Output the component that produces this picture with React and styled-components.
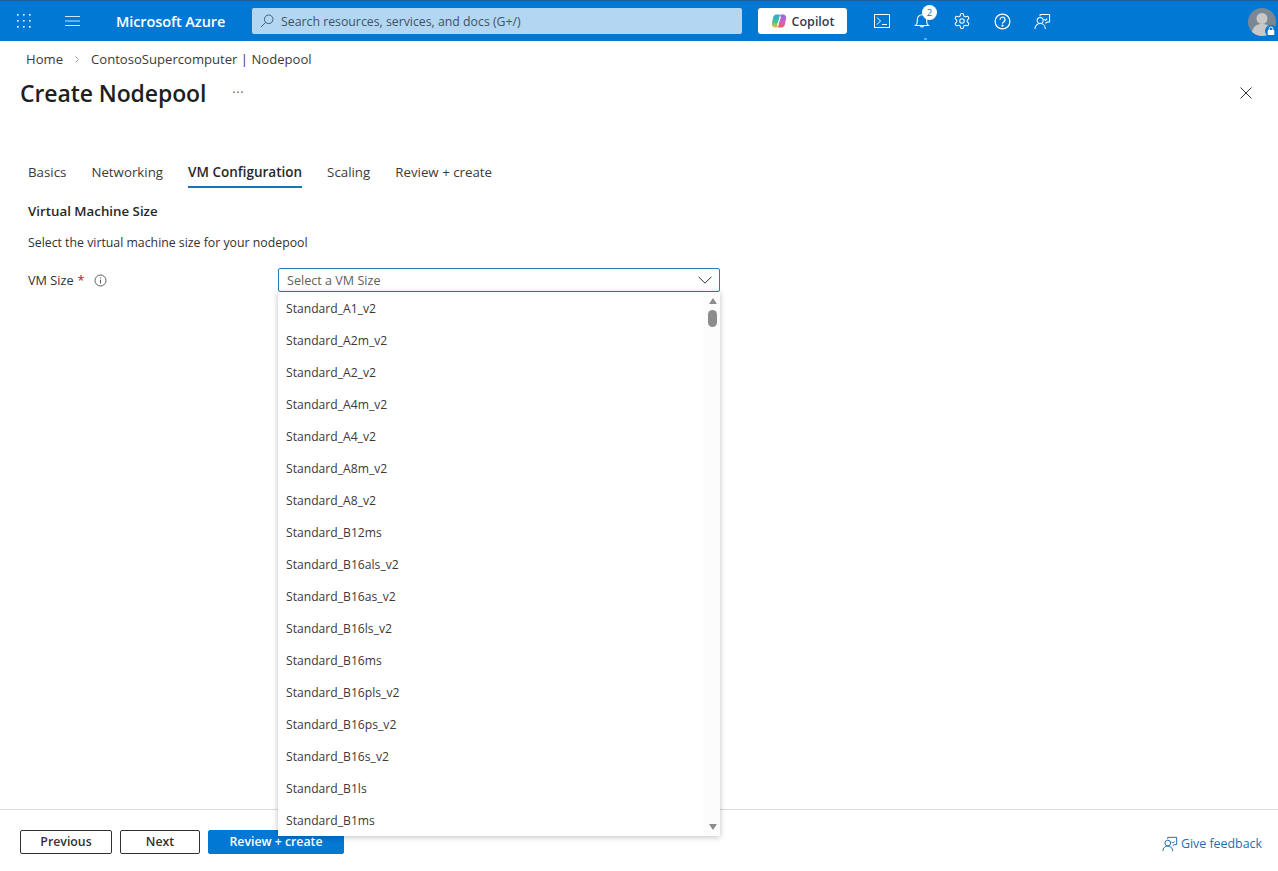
import React from "react";
import styled, { createGlobalStyle } from "styled-components";

const Global = createGlobalStyle`
  html, body { margin: 0; padding: 0; background: #fff; }
  body { font-family: "Open Sans", "Noto Sans", "Liberation Sans", sans-serif; color: #292827; }
  * { box-sizing: border-box; }
`;

const Page = styled.div`
  width: 1278px; height: 871px; display: flex; flex-direction: column; overflow: hidden; position: relative; background: #fff;
`;
const TopBar = styled.header`
  height: 41px; flex: none; background: #0078d4; border-top: 1px solid #1d5f96; display: flex; align-items: center; position: relative;
`;
const BarIcon = styled.div`
  width: 40px; height: 40px; flex: none; display: flex; align-items: center; justify-content: center; color: #fff; position: relative;
`;
const Waffle = styled(BarIcon)`margin-left: 4px;`;
const Burger = styled(BarIcon)`margin-left: 8px;`;
const Brand = styled.div`
  font-size: 14.5px; font-weight: 600; color: #fff; margin-left: 24px; width: 136px; white-space: nowrap; letter-spacing: -0.1px;
`;
const Search = styled.div`
  width: 490px; height: 26px; border-radius: 2px; background: #b3d7f2; display: flex; align-items: center; padding-left: 8px; gap: 7px; color: #323130; font-size: 12.3px; flex: none;
`;
const SearchText = styled.span`color: #3d5266;`;
const CopilotBtn = styled.div`
  width: 89px; height: 26px; margin-left: 16px; background: #fff; border-radius: 3px; display: flex; align-items: center; justify-content: center; gap: 5px; font-size: 12.5px; font-weight: 600; color: #2f3a52; flex: none;
`;
const Icons = styled.div`display: flex; margin-left: 15px;`;
const Badge = styled.span`
  position: absolute; top: 4px; left: 20px; width: 15px; height: 15px; border-radius: 50%; background: #fff; color: #0078d4; font-size: 9.5px; display: flex; align-items: center; justify-content: center;
`;
const Tick = styled.span`
  position: absolute; left: 22px; bottom: 1px; width: 3px; height: 2px; background: #50b0f0;
`;
const Avatar = styled.div`position: absolute; right: 0; top: 6px; width: 30px; height: 30px;`;

const Breadcrumb = styled.nav`
  height: 36px; flex: none; padding-left: 26px; display: flex; align-items: center; font-size: 13.1px; color: #3b3a39;
`;
const Crumb = styled.span`white-space: nowrap;`;
const CrumbSep = styled.span`margin: 0 12px; display: flex; color: #a19f9d;`;
const TitleRow = styled.div`
  height: 32px; flex: none; padding: 0 26px 0 20px; display: flex; align-items: center;
`;
const Title = styled.h1`
  margin: 0; font-size: 23px; font-weight: 600; color: #201f1e; white-space: nowrap; letter-spacing: -0.1px;
`;
const More = styled.span`margin-left: 26px; font-size: 13px; color: #605e5c; letter-spacing: 0.5px; position: relative; top: -1px;`;
const Close = styled.div`margin-left: auto; display: flex; color: #323130;`;

const Tabs = styled.div`
  margin-top: 45px; flex: none; padding-left: 28px; display: flex; height: 43px; gap: 25px;
`;
const Tab = styled.div`
  font-size: ${p => (p.$active ? 13.5 : 13.3)}px; color: #3b3a39; padding-top: 9px; height: 34px; white-space: nowrap;
  font-weight: ${p => (p.$active ? 600 : 400)};
  ${p => (p.$active ? "color:#292827; border-bottom: 2px solid #1b73b4;" : "")}
`;
const Content = styled.main`flex: 1; padding-left: 28px; min-height: 0;`;
const SectionTitle = styled.h2`
  margin: 0; font-size: 13.3px; font-weight: 600; color: #292827; line-height: 18px; padding-top: 5px; height: 24px;
`;
const Description = styled.p`margin: 13px 0 0; font-size: 12.3px; line-height: 18px; color: #323130;`;
const FieldRow = styled.div`display: flex; align-items: center; margin-top: 16px; height: 24px;`;
const FieldLabel = styled.label`
  width: 250px; flex: none; display: flex; align-items: center; font-size: 12.7px; color: #323130;
`;
const Required = styled.span`color: #a4262c; margin-left: 4px;`;
const InfoIcon = styled.span`display: flex; margin-left: 9px; color: #605e5c;`;
const SelectBox = styled.div`
  width: 442px; height: 24px; border: 1px solid #1f7fbd; border-radius: 2px; display: flex; align-items: center; justify-content: space-between; padding: 0 7px 0 8px; font-size: 12.6px; color: #605e5c;
`;
const Dropdown = styled.div`
  position: absolute; left: 278px; top: 292px; width: 442px; height: 544px; background: #fff; box-shadow: 0 1px 6px rgba(0,0,0,.25); display: flex; z-index: 5;
`;
const List = styled.ul`margin: 0; padding: 0; list-style: none; flex: 1;`;
const Option = styled.li`
  height: 32px; display: flex; align-items: center; padding-left: 8px; font-size: 12.15px; color: #3b3a39;
`;
const Scrollbar = styled.div`
  width: 17px; flex: none; background: #fcfcfc; display: flex; flex-direction: column; align-items: center; padding: 6px 0 6px 2px;
`;
const Thumb = styled.div`width: 9px; height: 17px; margin-top: 6px; border-radius: 5px; background: #8c8c8c;`;
const ArrowUp = styled.div`width: 0; height: 0; border-left: 4.5px solid transparent; border-right: 4.5px solid transparent; border-bottom: 6px solid #8c8c8c;`;
const ArrowDown = styled.div`width: 0; height: 0; margin-top: auto; border-left: 4.5px solid transparent; border-right: 4.5px solid transparent; border-top: 6px solid #8c8c8c;`;

const Footer = styled.footer`
  height: 62px; flex: none; border-top: 1px solid #dcdcdc; display: flex; align-items: flex-start; padding: 20px 16px 0 20px;
`;
const Button = styled.button`
  height: 24px; width: ${p => p.$w}px; margin-right: 8px; border-radius: 2px; font-family: inherit; font-size: 12.3px; font-weight: 600; padding: 0 0 2px;
  border: 1px solid ${p => (p.$primary ? "#0078d4" : "#323130")};
  background: ${p => (p.$primary ? "#0078d4" : "#fff")};
  color: ${p => (p.$primary ? "#fff" : "#323130")};
`;
const Feedback = styled.a`
  margin-left: auto; margin-top: 5px; display: flex; align-items: center; gap: 3px; color: #1b6fb0; font-size: 12.4px; white-space: nowrap;
`;

const FeedbackIcon = ({ size = 18 }) => (
  <svg width={size} height={size} viewBox="0 0 18 18" fill="none" stroke="currentColor" strokeWidth="1.1">
    <path d="M6.500 3.500V1.500h10v8H14l-2 1.500" />
    <circle cx="6.500" cy="8" r="3.200" />
    <path d="M1 17c0-3.400 2.300-5.800 5.500-5.800S12 13.600 12 17" />
    <path d="M10.800 6.500l1.400 1.500 1.800-2" />
  </svg>
);

const sizes = ["Standard_A1_v2","Standard_A2m_v2","Standard_A2_v2","Standard_A4m_v2","Standard_A4_v2","Standard_A8m_v2","Standard_A8_v2","Standard_B12ms","Standard_B16als_v2","Standard_B16as_v2","Standard_B16ls_v2","Standard_B16ms","Standard_B16pls_v2","Standard_B16ps_v2","Standard_B16s_v2","Standard_B1ls","Standard_B1ms"];

export default function App() {
  return (
    <Page>
      <Global />
      <TopBar>
        <Waffle>
          <svg width="14" height="14" viewBox="0 0 14 14" fill="currentColor">
            {[1, 7, 13].flatMap(y => [1, 7, 13].map(x => <rect key={`${x}-${y}`} x={x - 1} y={y - 1} width="1.6" height="1.6" />))}
          </svg>
        </Waffle>
        <Burger>
          <svg width="15" height="12" viewBox="0 0 15 12" fill="none" stroke="#cfe6f8" strokeWidth="1.2">
            <path d="M0 1.500h15M0 6h15M0 10.500h15" />
          </svg>
        </Burger>
        <Brand>Microsoft Azure</Brand>
        <Search>
          <svg width="14" height="14" viewBox="0 0 14 14" fill="none" stroke="#3f5f7c" strokeWidth="1">
            <circle cx="8.700" cy="5.300" r="4.300" /><path d="M5.600 8.400L1 13" />
          </svg>
          <SearchText>Search resources, services, and docs (G+/)</SearchText>
        </Search>
        <CopilotBtn>
          <svg width="16" height="16" viewBox="0 0 16 16">
            <defs>
              <linearGradient id="cgA" x1="0" y1="0" x2="0" y2="1"><stop offset="0" stopColor="#2fa8e0" /><stop offset=".55" stopColor="#45c28a" /><stop offset="1" stopColor="#f4c13a" /></linearGradient>
              <linearGradient id="cgB" x1="0" y1="0" x2="0" y2="1"><stop offset="0" stopColor="#8a6be0" /><stop offset=".55" stopColor="#d45fc0" /><stop offset="1" stopColor="#ef5f5f" /></linearGradient>
            </defs>
            <path d="M5.500 1.500H9L6.500 14.500H4C1.800 14.500.5 12.500.9 10.500l1.100-5.500C2.400 2.800 3.600 1.500 5.500 1.500z" fill="url(#cgA)" />
            <path d="M10.500 14.500H7L9.500 1.500H12c2.200 0 3.500 2 3.100 4l-1.100 5.500c-.4 2.200-1.600 3.500-3.500 3.500z" fill="url(#cgB)" />
            <path d="M9.600 3.500L6.400 12.500" stroke="#fff" strokeWidth="1.100" />
          </svg>
          Copilot
        </CopilotBtn>
        <Icons>
          <BarIcon>
            <svg width="16" height="14" viewBox="0 0 16 14" fill="none" stroke="currentColor" strokeWidth="1">
              <rect x=".5" y=".5" width="15" height="13" /><path d="M3 3.500l3.500 3.500L3 10.500M8 10.500h5" />
            </svg>
          </BarIcon>
          <BarIcon>
            <svg width="16" height="16" viewBox="0 0 16 16" fill="none" stroke="currentColor" strokeWidth="1.100">
              <path d="M1.500 12.500h13c-1.300-1-1.800-2-1.800-4V6.500a4.700 4.700 0 0 0-9.400 0v2c0 2-.5 3-1.800 4z" /><path d="M6.300 12.800a1.800 1.800 0 0 0 3.400 0" />
            </svg>
            <Badge>2</Badge>
            <Tick />
          </BarIcon>
          <BarIcon>
            <svg width="18" height="18" viewBox="0 0 24 24" fill="none" stroke="currentColor" strokeWidth="1.400" strokeLinejoin="round">
              <path d="M12.220 2h-.44a2 2 0 0 0-2 2v.18a2 2 0 0 1-1 1.730l-.43.25a2 2 0 0 1-2 0l-.15-.08a2 2 0 0 0-2.730.73l-.22.380a2 2 0 0 0 .73 2.730l.15.1a2 2 0 0 1 1 1.720v.510a2 2 0 0 1-1 1.740l-.15.090a2 2 0 0 0-.73 2.730l.22.380a2 2 0 0 0 2.730.730l.15-.080a2 2 0 0 1 2 0l.43.250a2 2 0 0 1 1 1.730V20a2 2 0 0 0 2 2h.44a2 2 0 0 0 2-2v-.180a2 2 0 0 1 1-1.730l.43-.250a2 2 0 0 1 2 0l.15.080a2 2 0 0 0 2.730-.730l.22-.390a2 2 0 0 0-.73-2.730l-.15-.080a2 2 0 0 1-1-1.740v-.500a2 2 0 0 1 1-1.740l.15-.090a2 2 0 0 0 .73-2.730l-.22-.380a2 2 0 0 0-2.730-.730l-.15.080a2 2 0 0 1-2 0l-.43-.250a2 2 0 0 1-1-1.730V4a2 2 0 0 0-2-2z" />
              <circle cx="12" cy="12" r="3" />
            </svg>
          </BarIcon>
          <BarIcon>
            <svg width="17" height="17" viewBox="0 0 17 17" fill="none" stroke="currentColor" strokeWidth="1.200">
              <circle cx="8.500" cy="8.500" r="7.400" />
              <path d="M6 6.700a2.500 2.500 0 1 1 3.700 2.200c-.8.500-1.200.9-1.200 1.800" />
              <circle cx="8.500" cy="12.700" r=".5" fill="currentColor" />
            </svg>
          </BarIcon>
          <BarIcon><FeedbackIcon size={17} /></BarIcon>
        </Icons>
        <Avatar>
          <svg width="30" height="30" viewBox="0 0 30 30">
            <circle cx="14" cy="15" r="14" fill="#7a8794" />
            <circle cx="14" cy="11.500" r="5.500" fill="#c8c8c8" />
            <path d="M4 25c1-5.500 4.500-8 10-8s9 2.500 10 8c-3 2.500-6.500 4-10 4s-7-1.500-10-4z" fill="#c8c8c8" />
            <circle cx="23" cy="24" r="6" fill="#0078d4" />
            <rect x="19.700" y="23" width="6.600" height="5" rx=".8" fill="#fff" />
            <path d="M21.200 23v-1.300a1.800 1.800 0 0 1 3.600 0V23" fill="none" stroke="#fff" strokeWidth="1" />
          </svg>
        </Avatar>
      </TopBar>

      <Breadcrumb>
        <Crumb>Home</Crumb>
        <CrumbSep>
          <svg width="4" height="7" viewBox="0 0 4 7" fill="none" stroke="currentColor" strokeWidth="1"><path d="M.5.500l3 3-3 3" /></svg>
        </CrumbSep>
        <Crumb>ContosoSupercomputer | Nodepool</Crumb>
      </Breadcrumb>

      <TitleRow>
        <Title>Create Nodepool</Title>
        <More>···</More>
        <Close>
          <svg width="12" height="12" viewBox="0 0 12 12" fill="none" stroke="currentColor" strokeWidth="1"><path d="M.5.500l11 11M11.500.500l-11 11" /></svg>
        </Close>
      </TitleRow>

      <Tabs>
        <Tab>Basics</Tab>
        <Tab>Networking</Tab>
        <Tab $active>VM Configuration</Tab>
        <Tab>Scaling</Tab>
        <Tab>Review + create</Tab>
      </Tabs>

      <Content>
        <SectionTitle>Virtual Machine Size</SectionTitle>
        <Description>Select the virtual machine size for your nodepool</Description>
        <FieldRow>
          <FieldLabel>
            VM Size<Required>*</Required>
            <InfoIcon>
              <svg width="13" height="13" viewBox="0 0 13 13" fill="none" stroke="currentColor" strokeWidth="1">
                <circle cx="6.500" cy="6.500" r="5.500" /><path d="M6.500 5.700v3.800M6.500 3.500v1" />
              </svg>
            </InfoIcon>
          </FieldLabel>
          <SelectBox>
            Select a VM Size
            <svg width="14" height="8" viewBox="0 0 14 8" fill="none" stroke="#323130" strokeWidth="1"><path d="M.5.700L7 7.200 13.500.700" /></svg>
          </SelectBox>
        </FieldRow>
      </Content>

      <Dropdown>
        <List>{sizes.map(s => <Option key={s}>{s}</Option>)}</List>
        <Scrollbar><ArrowUp /><Thumb /><ArrowDown /></Scrollbar>
      </Dropdown>

      <Footer>
        <Button $w={92}>Previous</Button>
        <Button $w={80}>Next</Button>
        <Button $w={136} $primary>Review + create</Button>
        <Feedback><FeedbackIcon size={16} />Give feedback</Feedback>
      </Footer>
    </Page>
  );
}
